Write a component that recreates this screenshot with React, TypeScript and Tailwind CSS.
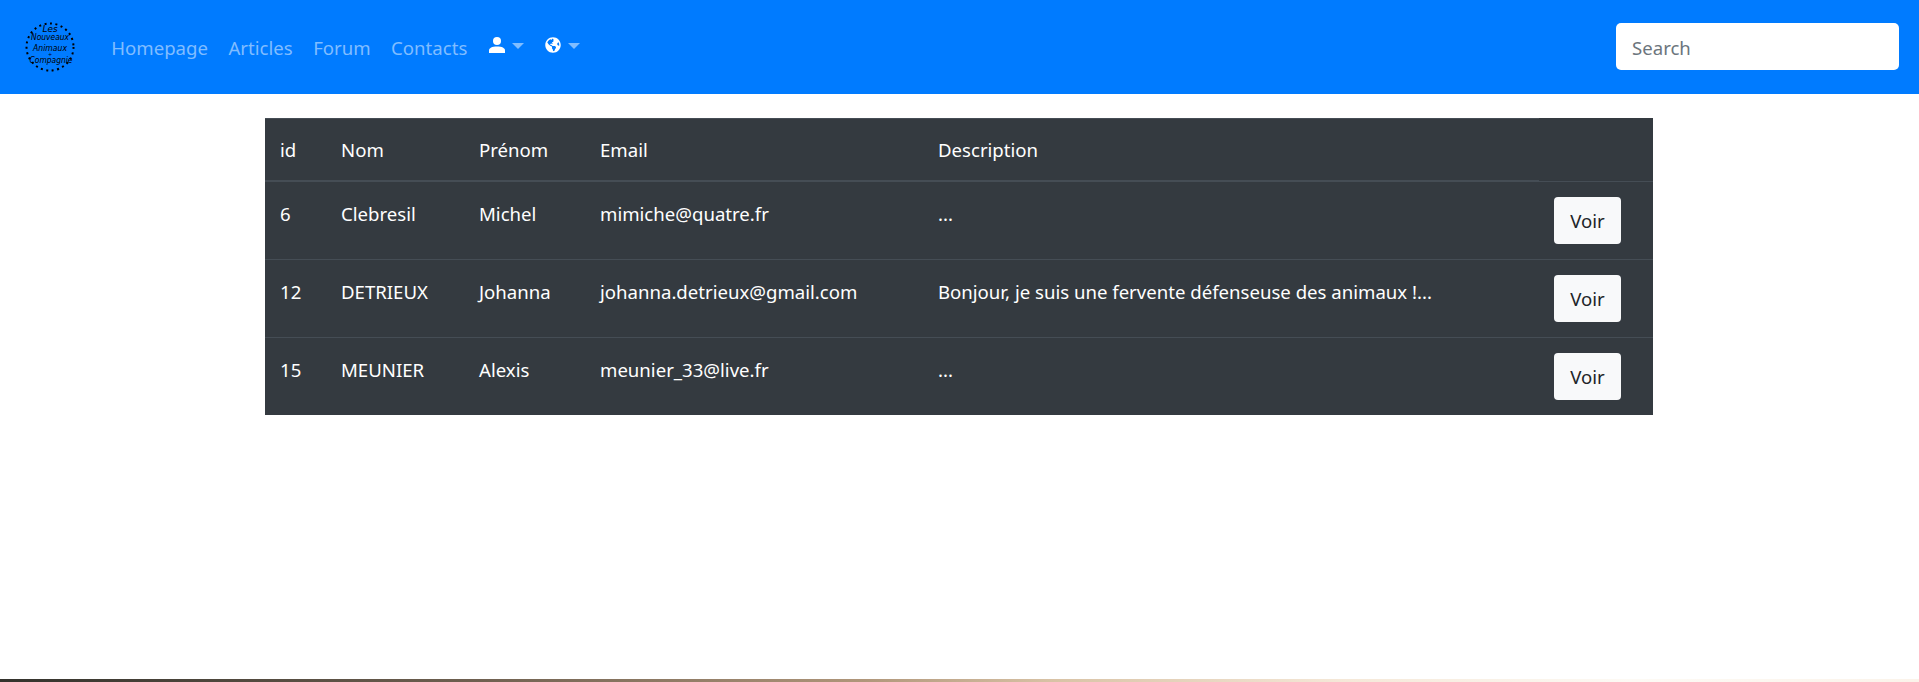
import { FaGlobeAmericas } from 'react-icons/fa';

const rows = [
  { id: 6, nom: 'Clebresil', prenom: 'Michel', email: 'mimiche@quatre.fr', description: '...' },
  { id: 12, nom: 'DETRIEUX', prenom: 'Johanna', email: 'johanna.detrieux@gmail.com', description: 'Bonjour, je suis une fervente défenseuse des animaux !...' },
  { id: 15, nom: 'MEUNIER', prenom: 'Alexis', email: 'meunier_33@live.fr', description: '...' },
];

function Caret() {
  return <span className="ml-[7px] mt-[3px] inline-block h-0 w-0 border-x-[6px] border-t-[6px] border-x-transparent border-t-[#80bdff]" />;
}

function Logo() {
  return (
    <svg width="52" height="54" viewBox="0 0 52 54" className="shrink-0">
      <circle cx="26" cy="27" r="23.500" fill="none" stroke="#000" strokeWidth="2" strokeDasharray="2 3.500" />
      <g fontFamily="'DejaVu Sans', sans-serif" fontStyle="italic" fontSize="8" textAnchor="middle" fill="#000">
        <text x="26" y="12" textLength="15" lengthAdjust="spacingAndGlyphs">Les</text>
        <text x="26" y="20" textLength="38" lengthAdjust="spacingAndGlyphs">Nouveaux</text>
        <text x="26" y="31" textLength="34" lengthAdjust="spacingAndGlyphs">Animaux</text>
        <text x="26" y="36" fontSize="5">+</text>
        <text x="27" y="43" textLength="43" lengthAdjust="spacingAndGlyphs">Compagnie</text>
      </g>
    </svg>
  );
}

export default function App() {
  return (
    <div className="flex h-[682px] flex-col overflow-hidden bg-white font-['Noto_Sans',sans-serif] text-[18.6px]">
      {/* Navbar */}
      <nav className="flex h-[94px] shrink-0 items-center bg-[#007bff] pl-[24px] pr-[20px]">
        <Logo />
        <div className="ml-[25px] flex items-center pt-[2px] text-[#80bdff]">
          <a className="px-[10.25px]">Homepage</a>
          <a className="px-[10.25px]">Articles</a>
          <a className="px-[10.25px]">Forum</a>
          <a className="px-[10.25px]">Contacts</a>
          <div className="mb-[6px] ml-[1px] flex items-center px-[10px]">
            <svg width="16" height="16" viewBox="0 0 16 16" fill="#fff">
              <circle cx="8" cy="4" r="4" />
              <path d="M0 16v-2.500C0 11 3 9.500 8 9.500s8 1.500 8 4V16z" />
            </svg>
            <Caret />
          </div>
          <div className="mb-[6px] ml-[1px] flex items-center px-[10px]">
            <FaGlobeAmericas className="h-[16px] w-[16px] text-white" />
            <Caret />
          </div>
        </div>
        <input
          placeholder="Search"
          className="mb-[1px] ml-auto h-[47px] w-[283px] rounded-[5px] bg-white px-[16px] pt-[2px] text-[#495057] outline-none placeholder:text-[#6c757d]"
        />
      </nav>

      {/* Table */}
      <div className="flex-1 pl-[265px] pt-[24px]">
        <table className="h-[297px] w-[1388px] table-fixed border-separate border-spacing-0 bg-[#343a40] text-white">
          <colgroup>
            <col className="w-[61px]" />
            <col className="w-[138px]" />
            <col className="w-[121px]" />
            <col className="w-[338px]" />
            <col className="w-[616px]" />
            <col />
          </colgroup>
          <thead>
            <tr className="h-[63px] text-left">
              <th className="border-y border-[#454d55] pl-[15px] font-normal">id</th>
              <th className="border-y border-[#454d55] pl-[15px] font-normal">Nom</th>
              <th className="border-y border-[#454d55] pl-[15px] font-normal">Prénom</th>
              <th className="border-y border-[#454d55] pl-[15px] font-normal">Email</th>
              <th className="border-y border-[#454d55] pl-[15px] font-normal">Description</th>
              <th />
            </tr>
          </thead>
          <tbody>
            {rows.map((row) => (
              <tr key={row.id} className="h-[78px]">
                <td className="border-t border-[#454d55] pb-[14px] pl-[15px]">{row.id}</td>
                <td className="border-t border-[#454d55] pb-[14px] pl-[15px]">{row.nom}</td>
                <td className="border-t border-[#454d55] pb-[14px] pl-[15px]">{row.prenom}</td>
                <td className="border-t border-[#454d55] pb-[14px] pl-[15px]">{row.email}</td>
                <td className="border-t border-[#454d55] pb-[14px] pl-[15px]">{row.description}</td>
                <td className="border-t border-[#454d55] pl-[15px]">
                  <button className="h-[47px] w-[67px] rounded-[4px] bg-[#f8f9fa] text-[#212529]">Voir</button>
                </td>
              </tr>
            ))}
          </tbody>
        </table>
      </div>

      {/* Bottom image strip */}
      <div className="h-[3px] shrink-0 bg-[linear-gradient(to_right,#33322c,#6f6050_25%,#b0967a_45%,#d9c3a6_55%,#f5e8d8_70%,#fdfaf5_85%,#fbf3ea)]" />
    </div>
  );
}
